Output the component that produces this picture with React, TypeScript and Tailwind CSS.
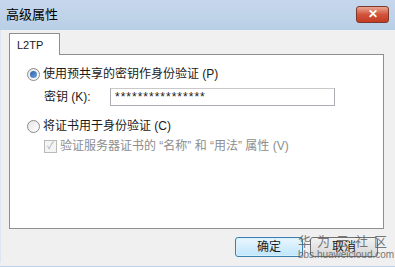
import React from "react";

const font = { fontFamily: '"Liberation Sans", "Noto Sans CJK SC", sans-serif' };

const Radio = ({ checked }: { checked?: boolean }) => (
    <span className="relative inline-flex w-[13px] h-[13px] rounded-full border border-[#8a8a8a] bg-gradient-to-br from-[#e6e6e6] to-[#ffffff] items-center justify-center shrink-0">
        {checked && (
            <span className="w-[7px] h-[7px] rounded-full bg-gradient-to-br from-[#2a5fa8] to-[#6ea3de]" />
        )}
    </span>
);

const App = () => {
    return (
        <div
            className="relative w-[395px] h-[267px] bg-[#f0f0f0] flex flex-col text-[12px] text-[#1a1a1a] overflow-hidden"
            style={font}
        >
            {/* Title bar */}
            <div className="h-[30px] flex items-center justify-between pl-[6px] pr-[6px] bg-gradient-to-b from-[#c6d7ec] to-[#b9cfe6]">
                <span className="text-[13px] text-black">高级属性</span>
                <button className="w-[33px] h-[17px] mt-[-2px] rounded-[3px] border border-[#7d3a2c] bg-gradient-to-b from-[#e8a493] via-[#d2533a] to-[#c23c22] flex items-center justify-center">
                    <span className="text-white font-bold text-[12px] leading-none">✕</span>
                </button>
            </div>

            {/* Body */}
            <div className="flex-1 flex flex-col px-[8px] pt-[3px] border-l border-[#dce6f2]">
                {/* Tab */}
                <div className="flex">
                    <div className="w-[51px] h-[22px] border border-b-0 border-[#8e8f8f] bg-white px-[7px] pt-[3px] text-[11px] mb-[-1px] relative z-10">
                        L2TP
                    </div>
                </div>
                <div className="h-[175px] w-[375px] border border-[#8e8f8f] bg-white flex flex-col pl-[17px] pt-[11px]">
                    <div className="flex items-center gap-[3px] h-[16px]">
                        <Radio checked />
                        <span>使用预共享的密钥作身份验证 (P)</span>
                    </div>
                    <div className="flex items-center mt-[6px] pl-[17px]">
                        <span className="w-[66px]">密钥 (K):</span>
                        <div className="w-[225px] h-[18px] border border-[#abadb3] border-t-[#c9c9c9] px-[4px] flex items-center text-[12px] tracking-[1px]">
                            ****************
                        </div>
                    </div>
                    <div className="flex items-center gap-[3px] h-[16px] mt-[12px]">
                        <Radio />
                        <span>将证书用于身份验证 (C)</span>
                    </div>
                    <div className="flex items-center gap-[3px] mt-[3px] pl-[17px] text-[#8d8d8d]">
                        <span className="w-[13px] h-[13px] border border-[#b9b9b9] bg-[#f4f4f4] flex items-center justify-center text-[10px] text-[#a8a8a8] leading-none">
                            ✓
                        </span>
                        <span>验证服务器证书的 “名称” 和 “用法” 属性 (V)</span>
                    </div>
                </div>

                {/* Buttons */}
                <div className="flex justify-end gap-[7px] mt-[8px] pr-[9px]">
                    <button className="w-[68px] h-[20px] rounded-[3px] border border-[#3c7fb1] bg-gradient-to-b from-[#eaf6fd] to-[#bee6fd] shadow-[inset_0_0_0_1px_#d7f0fc]">
                        确定
                    </button>
                    <button className="w-[68px] h-[20px] rounded-[3px] border border-[#707070] bg-gradient-to-b from-[#f2f2f2] to-[#d6d6d6]">
                        取消
                    </button>
                </div>
            </div>
            <div className="h-[4px] border-b border-[#bcd3ea]" />

            {/* Watermark */}
            <div className="absolute left-[298px] top-[234px] flex flex-col text-[#5a5a5a] opacity-80 pointer-events-none">
                <span className="text-[13px] leading-[15px] tracking-[6px] whitespace-nowrap">华为云社区</span>
                <span className="text-[10px] leading-[12px] whitespace-nowrap">bbs.huaweicloud.com</span>
            </div>
        </div>
    );
};

export default App;
